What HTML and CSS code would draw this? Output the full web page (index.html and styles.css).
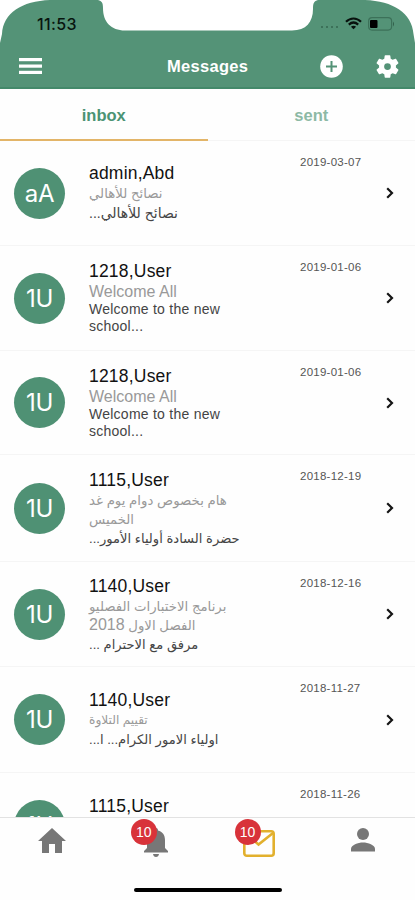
FILE: index.html
```
<!DOCTYPE html>
<html lang="en">
<head>
<meta charset="utf-8">
<title>Messages</title>
<link rel="stylesheet" href="styles.css">
</head>
<body>
<div class="phone">
  <header class="header">
    <svg class="screen-edge" width="415" height="45" viewBox="0 0 415 45" fill="#fff">
      <path d="M0 0H50C22 1 3 13 2 34L0 43Z"/>
      <path d="M415 0H365C393 1 412 13 413.500 34L415 43Z"/>
      <path d="M98 0C102 1 103 3 103 8C103 22 111 30.500 125 30.500H292C306 30.500 313 22 313 9C313 3 314 1 318 0Z"/>
    </svg>
    <div class="status">
      <span class="time">11:53</span>
      <span class="signal"><i></i><i></i><i></i><i></i></span>
      <svg class="wifi" width="17" height="13" viewBox="0 0 17 13" fill="none" stroke="#08110d" stroke-width="2.200"><path d="M1 4.700C5.500.400 11.500.400 16 4.700M3.800 7.600C6.700 5 10.300 5 13.200 7.600"/><path d="M8.500 12.300L5.900 9.700Q8.500 7.800 11.100 9.700Z" fill="#08110d" stroke="none"/></svg>
      <svg class="battery" width="27" height="14" viewBox="0 0 27 14"><rect x=".6" y=".6" width="23" height="12.500" rx="3.500" fill="none" stroke="#3c7159" stroke-width="1.200"/><path d="M25 4.500Q27 7 25 9.500Z" fill="#315f4a"/><rect x="2" y="3" width="7.500" height="8" rx="1" fill="#000"/></svg>
    </div>
    <div class="bar">
      <svg class="menu" width="23" height="17" viewBox="0 0 23 17" fill="#fff"><rect width="23" height="3.200"/><rect y="6.500" width="23" height="3.200"/><rect y="12.800" width="23" height="3.200"/></svg>
      <h1>Messages</h1>
      <svg class="add" width="23" height="23" viewBox="0 0 23 23"><circle cx="11.500" cy="11.500" r="11.300" fill="#fff"/><path d="M11.500 6V17M6 11.500H17" stroke="#549377" stroke-width="2"/></svg>
      <svg class="gear" width="27" height="27" viewBox="0 0 24 24" fill="#fff"><path d="M19.430 12.980c.04-.32.07-.64.07-.98s-.03-.66-.07-.98l2.110-1.650c.19-.15.24-.42.12-.64l-2-3.460c-.12-.22-.39-.3-.61-.22l-2.490 1c-.52-.4-1.080-.73-1.690-.98l-.38-2.650C14.460 2.180 14.250 2 14 2h-4c-.25 0-.46.18-.49.42l-.38 2.650c-.61.25-1.170.59-1.690.98l-2.490-1c-.23-.09-.49 0-.61.22l-2 3.460c-.13.22-.07.49.12.64l2.110 1.650c-.04.32-.07.65-.07.98s.03.66.07.98l-2.110 1.650c-.19.15-.24.42-.12.64l2 3.460c.12.22.39.3.61.22l2.490-1c.52.4 1.080.73 1.690.98l.38 2.650c.03.24.24.42.49.42h4c.25 0 .46-.18.49-.42l.38-2.650c.61-.25 1.170-.59 1.690-.98l2.490 1c.23.09.49 0 .61-.22l2-3.460c.12-.22.07-.49-.12-.64zM12 15a3 3 0 1 1 0-6 3 3 0 0 1 0 6z"/></svg>
    </div>
  </header>
  <nav class="tabs"><span class="tab active">inbox</span><span class="tab">sent</span></nav>
  <main class="list">
    <article class="row">
      <div class="avatar">aA</div>
      <div class="text low"><h2>admin,Abd</h2><p class="subject ar" dir="rtl">نصائح للأهالي</p><p class="body ar wide" dir="rtl">نصائح للأهالي...</p></div>
      <time>2019-03-07</time>
      <svg class="chevron" width="8" height="12" viewBox="0 0 8 12"><path d="M1.200 1.200L6 6L1.200 10.800"/></svg>
    </article>
    <article class="row">
      <div class="avatar">1U</div>
      <div class="text"><h2>1218,User</h2><p class="subject">Welcome All</p><p class="body">Welcome to the new<br>school...</p></div>
      <time>2019-01-06</time>
      <svg class="chevron" width="8" height="12" viewBox="0 0 8 12"><path d="M1.200 1.200L6 6L1.200 10.800"/></svg>
    </article>
    <article class="row short">
      <div class="avatar">1U</div>
      <div class="text"><h2>1218,User</h2><p class="subject">Welcome All</p><p class="body">Welcome to the new<br>school...</p></div>
      <time>2019-01-06</time>
      <svg class="chevron" width="8" height="12" viewBox="0 0 8 12"><path d="M1.200 1.200L6 6L1.200 10.800"/></svg>
    </article>
    <article class="row tall">
      <div class="avatar">1U</div>
      <div class="text"><h2>1115,User</h2><p class="subject ar" dir="rtl">هام بخصوص دوام يوم غد<br>الخميس</p><p class="body ar" dir="rtl">حضرة السادة أولياء الأمور...</p></div>
      <time>2018-12-19</time>
      <svg class="chevron" width="8" height="12" viewBox="0 0 8 12"><path d="M1.200 1.200L6 6L1.200 10.800"/></svg>
    </article>
    <article class="row">
      <div class="avatar">1U</div>
      <div class="text high"><h2>1140,User</h2><p class="subject ar" dir="rtl">برنامج الاختبارات الفصليو<br>الفصل الاول <span class="year">2018</span></p><p class="body ar" dir="rtl">مرفق مع الاحترام ...</p></div>
      <time>2018-12-16</time>
      <svg class="chevron" width="8" height="12" viewBox="0 0 8 12"><path d="M1.200 1.200L6 6L1.200 10.800"/></svg>
    </article>
    <article class="row last">
      <div class="avatar">1U</div>
      <div class="text lower"><h2>1140,User</h2><p class="subject ar narrow" dir="rtl">تقييم التلاوة</p><p class="body ar" dir="rtl">اولياء الامور الكرام... ا...</p></div>
      <time>2018-11-27</time>
      <svg class="chevron" width="8" height="12" viewBox="0 0 8 12"><path d="M1.200 1.200L6 6L1.200 10.800"/></svg>
    </article>
    <article class="row">
      <div class="avatar">1U</div>
      <div class="text lower"><h2>1115,User</h2></div>
      <time>2018-11-26</time>
    </article>
  </main>
  <footer class="dock">
    <div class="items">
      <div class="item"><svg width="28" height="25" viewBox="0 0 28 25" fill="#777"><path d="M14 0L28 13H24V25H17V16H11V25H4V13H0Z"/></svg></div>
      <div class="item bell"><svg width="24" height="29" viewBox="0 0 24 29" fill="#777"><path d="M12 0C13.500 0 14 1 14 2.500C18.500 3.500 21 7 21 12V20L24 23V24.500H0V23L3 20V12C3 7 5.500 3.500 10 2.500C10 1 10.500 0 12 0ZM9 26H15Q14.500 29 12 29Q9.500 29 9 26Z"/></svg><span class="badge">10</span></div>
      <div class="item mail"><svg width="32" height="27" viewBox="0 0 32 27" fill="none" stroke="#e2b02d" stroke-width="2.600"><rect x="1.300" y="1.300" width="29.400" height="24.400" rx="2.500"/><path d="M2 3L15.500 14.500L30 3"/></svg><span class="badge">10</span></div>
      <div class="item"><svg width="24" height="24" viewBox="0 0 24 24" fill="#777"><circle cx="12" cy="6" r="6"/><path d="M0 23.500V21C0 17 7 14.500 12 14.500S24 17 24 21V23.500Z"/></svg></div>
    </div>
    <div class="home-bar"></div>
  </footer>
</div>
</body>
</html>
```
FILE: styles.css
```
* { box-sizing: border-box; }
body { margin: 0; background: #fff; font-family: "Liberation Sans", "DejaVu Sans", sans-serif; }
.phone { width: 415px; height: 900px; display: flex; flex-direction: column; overflow: hidden; background: #fefefe; }
svg { display: block; flex: none; }
h1, h2, p { margin: 0; font-weight: normal; }

.header { position: relative; height: 89px; flex: none; background: #549377; border-bottom: 2px solid #43896a; }
.screen-edge { position: absolute; left: 0; top: 0; }
.status { position: relative; height: 44px; display: flex; align-items: center; padding: 3px 20px 0 37px; }
.time { width: 284px; font: 500 16px/20px Inter, sans-serif; letter-spacing: .4px; color: #08150f; }
.signal { display: flex; gap: 3px; width: 24px; padding-top: 7px; }
.signal i { width: 2px; height: 2px; background: #3c7159; }
.battery { margin-left: 6px; }
.bar { display: flex; align-items: center; height: 44px; padding-left: 19px; }
.menu { margin-top: 1px; }
.bar h1 { width: 278px; padding-left: 125px; font: 700 16.5px/20px "Liberation Sans", sans-serif; color: #fff; letter-spacing: .3px; }
.gear { margin-left: 31px; }

.tabs { flex: none; height: 52px; display: flex; border-bottom: 1px solid #f5f5f5; }
.tab { flex: 1; height: 52px; text-align: center; font: 700 16.5px/52px "Liberation Sans", sans-serif; color: #8db9a5; }
.tab.active { color: #4b9374; border-bottom: 2px solid #e3b568; }

.list { flex: 1; min-height: 0; overflow: hidden; }
.row { height: 105px; display: grid; grid-template-columns: 75px 211px 90px 1fr; padding-left: 14px; border-bottom: 1px solid #f5f5f5; }
.row.tall { height: 107px; }
.row.short { height: 104px; }
.row.last { height: 106px; }
.avatar { align-self: center; width: 51px; height: 51px; border-radius: 50%; background: #4f9174; color: #fff; text-align: center; font: 24px/51px Inter, sans-serif; letter-spacing: -.3px; }
.text { padding-top: 15px; }
.text.low { padding-top: 22px; }
.text.lower { padding-top: 23px; }
.text.high { padding-top: 14px; }
h2 { font-size: 17.5px; line-height: 21px; letter-spacing: .2px; color: #111; }
.subject { font-size: 16px; line-height: 19px; color: #999; }
.body { font-size: 14px; line-height: 17px; letter-spacing: .25px; color: #444; }
.ar { text-align: left; white-space: nowrap; letter-spacing: 0; }
.subject.ar { font-size: 13.3px; }
.subject.narrow { font-size: 12.2px; }
.body.ar { font-size: 13.1px; line-height: 20px; }
.body.wide { font-size: 14px; }
.year { font-size: 16px; line-height: 1; }
time { padding-top: 14px; font-size: 11.5px; line-height: 14px; letter-spacing: .25px; color: #555; }
.chevron { align-self: center; margin-left: -4px; }
.chevron path { fill: none; stroke: #151515; stroke-width: 2.2; }

.dock { flex: none; height: 83px; border-top: 1px solid #e2e2e2; background: #fefefe; }
.items { display: flex; height: 50px; }
.item { position: relative; flex: 1; display: flex; justify-content: center; padding-top: 10px; }
.mail { padding-top: 12px; }
.badge { position: absolute; left: 27px; top: 1px; width: 26px; height: 26px; border-radius: 50%; background: #d8333a; color: #fff; font-size: 14px; line-height: 26px; text-align: center; }
.home-bar { width: 148px; height: 4px; margin: 20px auto 0; border-radius: 2px; background: #000; }
```
